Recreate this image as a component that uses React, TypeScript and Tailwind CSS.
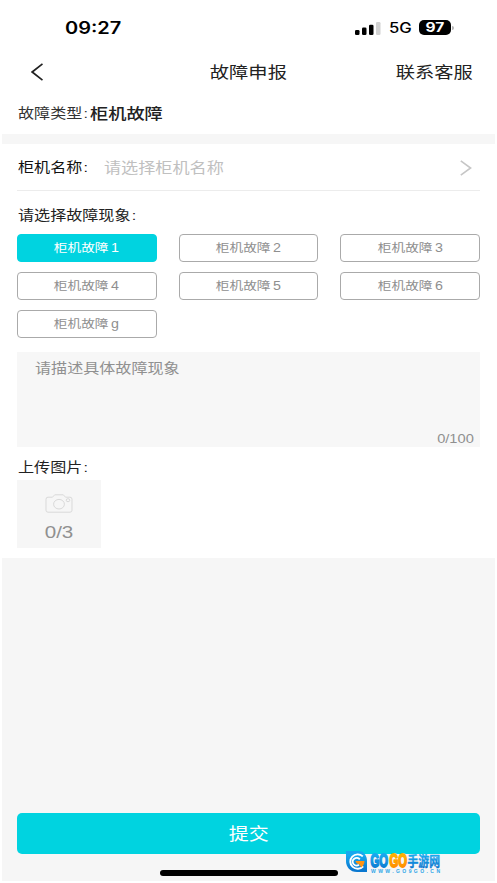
import { clsx } from "clsx";
import type { ReactNode } from "react";

const faults = [
  "柜机故障1",
  "柜机故障2",
  "柜机故障3",
  "柜机故障4",
  "柜机故障5",
  "柜机故障6",
  "柜机故障g",
];

// The type on this screen is wider than it is tall
const Wide = ({ className, children }: { className?: string; children: ReactNode }) => (
  <span className={clsx("inline-block whitespace-nowrap scale-x-[1.19]", className)}>
    {children}
  </span>
);

const StatusBar = () => {
  return (
    <div className="flex h-[46px] items-center pt-[9px] pl-[65px] pr-[43px] text-black">
      <Wide className="origin-left pt-[2px] text-[16.8px] font-semibold">09:27</Wide>
      <div className="ml-auto flex items-center">
        <svg width="26" height="14" viewBox="0 0 26 14">
          <rect x="0" y="9" width="4.5" height="5" rx="1.3" />
          <rect x="7" y="6.5" width="4.5" height="7.5" rx="1.3" />
          <rect x="14" y="3.7" width="4.5" height="10.3" rx="1.3" />
          <rect x="21" y="1" width="4.5" height="13" rx="1.3" fill="#d2d2d2" />
        </svg>
        <Wide className="ml-2 w-[19px] origin-left text-[14px] font-medium">5G</Wide>
        <div className="ml-[11px] flex h-[15px] w-8 items-center justify-center rounded-[5px] bg-black text-white">
          <Wide className="text-[13px] leading-none font-bold">97</Wide>
        </div>
        <div className="ml-px h-1 w-[2px] rounded-r bg-[#b5b5b5]" />
      </div>
    </div>
  );
};

const Header = () => {
  return (
    <div className="grid h-[50px] grid-cols-3 items-center pt-px pl-[31px] pr-[24px] text-[16.2px] text-[#222]">
      <svg width="12" height="18" viewBox="0 0 12 18" fill="none" stroke="#222" strokeWidth="1.7">
        <path d="M11.5 .8 1.2 9l10.3 8.2" />
      </svg>
      <Wide className="-ml-[7px] justify-self-center pt-px">故障申报</Wide>
      <Wide className="origin-right justify-self-end pt-px">联系客服</Wide>
    </div>
  );
};

const Watermark = () => {
  return (
    <div className="absolute top-[851px] left-[345px] h-[24px] w-[98px]">
      <svg
        className="overflow-visible"
        width="98"
        height="24"
        viewBox="0 0 98 24"
        fontFamily="'Liberation Sans', 'Noto Sans CJK SC', sans-serif"
        fontWeight="bold"
      >
        <defs>
          <linearGradient id="blue" x1="0" y1="0" x2="0" y2="1">
            <stop offset="0.2" stopColor="#18a8ee" />
            <stop offset="0.9" stopColor="#0a78d0" />
          </linearGradient>
          <linearGradient id="orange" x1="0" y1="0" x2="0" y2="1">
            <stop offset="0.2" stopColor="#ffb000" />
            <stop offset="0.9" stopColor="#ff8a00" />
          </linearGradient>
        </defs>
        <path d="M1 0h13c5 0 8 5 8 10v11H12C5 21 1 16 1 10Z" fill="url(#blue)" />
        <path d="M17.8 5.4a7.4 7.2 0 1 0 .4 10" fill="none" stroke="#fff" strokeWidth="1.9" />
        <path d="M14.8 8.4a4 3.8 0 1 0-.8 5.4" fill="none" stroke="#fff" strokeWidth="1.8" />
        <path d="M10.5 10h9c0 3-1.5 5-3.2 6.5L14 13c-2 0-3-1-3.5-3Z" fill="#ff9414" />
        <g strokeLinejoin="round" fontSize="18">
          <text x="25.5" y="16" textLength="17.5" lengthAdjust="spacingAndGlyphs" fill="url(#blue)" stroke="url(#blue)" strokeWidth="1.8">GO</text>
          <text x="44.5" y="16" textLength="17.5" lengthAdjust="spacingAndGlyphs" fill="url(#orange)" stroke="url(#orange)" strokeWidth="1.8">GO</text>
          <text x="62.5" y="14.5" fontSize="14" textLength="32.5" lengthAdjust="spacingAndGlyphs" fill="url(#blue)" stroke="url(#blue)" strokeWidth=".4">手游网</text>
        </g>
        <text x="26" y="22" fontSize="5" textLength="69" fill="#2da5e8">WWW.GO9GO.CN</text>
      </svg>
    </div>
  );
};

const App = () => {
  return (
    <div className="relative flex h-[883px] w-[497px] flex-col overflow-hidden bg-white px-[2px] pb-[2px] font-['Liberation_Sans','Noto_Sans_CJK_SC',sans-serif]">
      <div className="-mx-[2px] font-[Inter,'Noto_Sans_CJK_SC',sans-serif]">
        <StatusBar />
        <Header />
      </div>

      <div className="flex h-[38px] items-center pb-px pl-4">
        <Wide className="w-[72px] origin-left text-[13.5px] text-[#333]">故障类型<span className="ml-px">:</span></Wide>
        <Wide className="origin-left text-[15.3px] font-medium text-[#222]">柜机故障</Wide>
      </div>
      <div className="h-[10px] bg-[#f6f6f6]" />

      <div className="mx-[15px] flex h-[47px] items-center border-b border-[#ececec] pl-px">
        <Wide className="w-[86px] origin-left pt-[3px] text-[13.5px] text-[#111]">柜机名称<span className="ml-px">:</span></Wide>
        <Wide className="origin-left pt-[3px] text-[14.4px] text-[#c0c0c0]">请选择柜机名称</Wide>
        <svg className="mt-px mr-[8px] ml-auto" width="12" height="16" viewBox="0 0 12 16" fill="none" stroke="#c6c6c6" strokeWidth="1.6">
          <path d="m.8.8 9.8 7.2-9.8 7.2" />
        </svg>
      </div>

      <div className="flex h-[43px] items-center pt-[7px] pl-4 text-[13.5px] text-[#222]">
        <Wide className="origin-left">请选择故障现象<span className="ml-px">:</span></Wide>
      </div>
      <div className="mx-[15px] grid grid-cols-3 gap-x-[22px] gap-y-[10px]">
        {faults.map((fault, i) => (
          <button
            key={fault}
            className={clsx(
              "h-7 rounded border pt-px text-[11.5px] leading-none",
              i === 0
                ? "border-[#00d3e0] bg-[#00d3e0] text-white"
                : "border-[#aaa] bg-white text-[#8f8f8f]"
            )}
          >
            <Wide>
              {fault.slice(0, 4)}
              <span className="ml-[2px] text-[12px]">{fault.slice(4)}</span>
            </Wide>
          </button>
        ))}
      </div>

      <div className="mx-[15px] mt-[14px] flex h-[95px] flex-col justify-between bg-[#f7f7f7] pt-[7px] pr-[6px] pl-[18px] text-[#909090]">
        <Wide className="origin-left self-start text-[13.5px]">请描述具体故障现象</Wide>
        <Wide className="-mb-px origin-right self-end text-[12.3px]">0/100</Wide>
      </div>

      <div className="flex h-[33px] items-center pt-[9px] pl-4 text-[13.5px] text-[#222]">
        <Wide className="origin-left">上传图片<span className="ml-px">:</span></Wide>
      </div>
      <div className="ml-[15px] flex h-[68px] w-[84px] flex-col items-center bg-[#f6f6f6] pt-[14px] text-[#909090]">
        <svg width="28" height="19" viewBox="0 0 28 19" fill="none" stroke="#d9d9d9" strokeWidth="1">
          <path d="M3 3.2h4.5L9.7.8h8.6l2.2 2.4H25a2 2 0 0 1 2 2v11a2 2 0 0 1-2 2H3a2 2 0 0 1-2-2v-11a2 2 0 0 1 2-2Z" />
          <ellipse cx="14" cy="10.2" rx="5.4" ry="4.8" />
          <ellipse cx="23" cy="6.2" rx="1.8" ry="1.5" />
        </svg>
        <Wide className="mt-[7px] text-[17.3px]">0/3</Wide>
      </div>

      <div className="mt-[10px] flex grow flex-col items-center justify-end bg-[#f6f6f6] px-[15px] pb-[5px]">
        <button className="h-[41px] w-full rounded-[5px] bg-[#00d3e0] pt-[3px] text-[16.8px] text-white">
          <Wide>提交</Wide>
        </button>
        <div className="mt-4 h-[6px] w-[178px] rounded-full bg-black" />
      </div>
      <Watermark />
    </div>
  );
};

export default App;
